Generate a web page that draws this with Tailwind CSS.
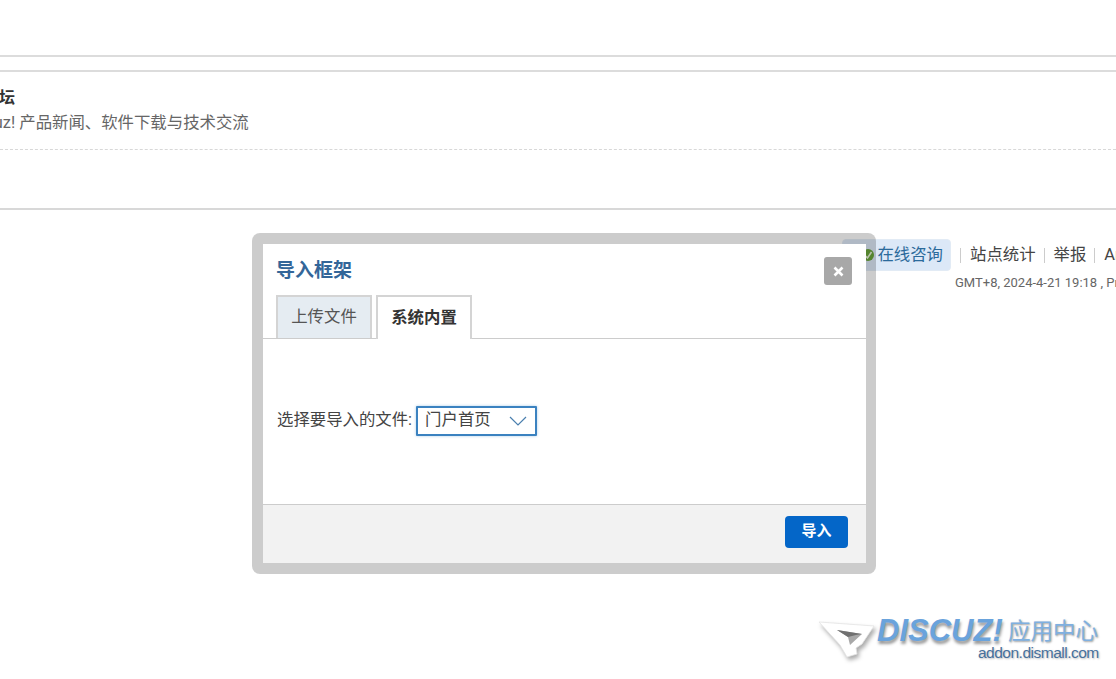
<!DOCTYPE html>
<html lang="zh-CN">
  <head>
    <meta charset="UTF-8" />
    <title>导入框架</title>
    <script src="https://cdn.jsdelivr.net/npm/@tailwindcss/browser@4"></script>
  </head>
  <body class="relative h-[679px] w-[1116px] overflow-hidden bg-white font-['Roboto','Noto_Sans_CJK_SC',sans-serif] text-[#444]">
    <!-- page behind the dialog -->
    <div class="h-[55px]"></div>
    <div class="h-[2px] bg-[#dcdcdc]"></div>
    <div class="h-[13px]"></div>
    <div class="h-[2px] bg-[#dcdcdc]"></div>
    <div class="h-[78px] border-b border-dashed border-[#d8d8d8] pt-[16px]">
      <p class="ml-[-49px] h-[20px] text-[16px] leading-[20px] font-bold text-[#333]">官方论坛</p>
      <p class="ml-[-38px] mt-[5px] h-[20px] text-[16.4px] leading-[20px] text-[#666] whitespace-nowrap">Discuz! 产品新闻、软件下载与技术交流</p>
    </div>
    <div class="h-[58px]"></div>
    <div class="h-[2px] bg-[#d8d8d8]"></div>

    <div class="mt-[29px] ml-[842px] flex h-[32px] w-max items-center whitespace-nowrap text-[16.4px] text-[#444]">
      <span class="flex h-[32px] w-[109px] items-center justify-end rounded-[4px] border border-[#e2ebf5] bg-[#dce8f7] pr-[7px] text-[#2b6a9b]">
        <svg class="mr-[2px]" width="14" height="14" viewBox="0 0 14 14"><circle cx="7" cy="7" r="6" fill="#6aa53a" /><path d="M3.5 7l3 3 4-6" fill="none" stroke="#e8f3d8" stroke-width="1.6" /></svg>
        在线咨询
      </span>
      <span class="ml-[9px] h-[15px] w-[1px] bg-[#ccc]"></span>
      <span class="ml-[9px]">站点统计</span>
      <span class="ml-[8px] h-[15px] w-[1px] bg-[#ccc]"></span>
      <span class="ml-[9px]">举报</span>
      <span class="ml-[8px] h-[15px] w-[1px] bg-[#ccc]"></span>
      <span class="ml-[9px]">Archiver</span>
    </div>
    <p class="ml-[955px] mt-[3px] w-max whitespace-nowrap text-[13px] leading-[18px] text-[#666]">GMT+8, 2024-4-21 19:18 , Processed in 0.03 second(s)</p>

    <!-- logo -->
    <div class="absolute left-[818px] top-[612px] h-[50px] w-[290px]">
      <svg class="absolute left-0 top-[6px] [filter:drop-shadow(2px_3px_2px_#aaa)]" width="60" height="46" viewBox="0 0 60 46">
        <path d="M1 4L56 8 44 26 38 30 39 36 29 39 22 27Z" fill="#fff" stroke="#e4e4e4" stroke-width="0.8" stroke-linejoin="round" />
        <path d="M19 12L44 16 32 27 30 19Z" fill="#a8a8a8" />
        <path d="M19 12L44 16 38 17 30 19Z" fill="#707070" />
      </svg>
      <span class="absolute left-[59px] top-[1px] font-['Liberation_Sans',sans-serif] text-[31px] leading-[36px] font-bold italic text-[#6aa3dc] [text-shadow:1px_3px_3px_#999]">DISCUZ!</span>
      <span class="absolute left-[190px] top-[4px] text-[22.5px] leading-[30px] text-[#7fb0e0] [text-shadow:1px_1px_2px_#999]">应用中心</span>
      <span class="absolute left-[160px] top-[31px] font-['Liberation_Sans',sans-serif] text-[15.5px] leading-[20px] tracking-[-0.5px] text-[#47709c] [text-shadow:1px_1px_2px_#bbb]">addon.dismall.com</span>
    </div>

    <!-- dialog -->
    <div class="absolute left-[252px] top-[233px] h-[341px] w-[624px] rounded-[8px] bg-black/20 p-[11px] pr-[10px]">
      <div class="flex h-[319px] flex-col bg-white">
        <div class="relative h-[51px] shrink-0">
          <h2 class="pl-[13px] pt-[13px] text-[19px] leading-[27px] font-bold text-[#369]">导入框架</h2>
          <button class="absolute right-[14px] top-[13px] flex h-[28px] w-[28px] items-center justify-center rounded-[3px] bg-[#a8a8a8]">
            <svg width="11" height="11" viewBox="0 0 11 11"><path d="M1.5 1.5l8 8M9.5 1.5l-8 8" stroke="#fff" stroke-width="2.6" /></svg>
          </button>
        </div>
        <div class="flex h-[44px] shrink-0 gap-[4px] border-b border-[#ccc] pl-[13px]">
          <div class="flex h-[43px] w-[96px] items-center justify-center border-2 border-b-0 border-[#d4d4d4] bg-[#e5ecf2] text-[16.4px] text-[#555]">上传文件</div>
          <div class="flex h-[44px] w-[96px] items-center justify-center border-2 border-b-0 border-[#d4d4d4] bg-white text-[16.4px] font-bold text-[#333]">系统内置</div>
        </div>
        <div class="flex h-[166px] shrink-0 items-center border-b border-[#ccc] pb-[2px] pl-[14px]">
          <label class="text-[16.4px] text-[#444]">选择要导入的文件:</label>
          <div class="ml-[4px] flex h-[30px] w-[121px] items-center justify-between rounded-[1px] border-2 border-[#3b82c0] bg-white pl-[7px] pr-[8px] text-[16.4px] text-[#444] shadow-[0_0_3px_#a9cbe8]">
            门户首页
            <svg width="18" height="10" viewBox="0 0 18 10"><path d="M1 1l8 8 8-8" fill="none" stroke="#4a7fae" stroke-width="1.2" /></svg>
          </div>
        </div>
        <div class="flex flex-1 items-center justify-end bg-[#f2f2f2] pb-[5px] pr-[18px]">
          <button class="h-[32px] w-[63px] rounded-[4px] bg-[#0466c8] text-[15px] font-bold text-white">导入</button>
        </div>
      </div>
    </div>
  </body>
</html>
